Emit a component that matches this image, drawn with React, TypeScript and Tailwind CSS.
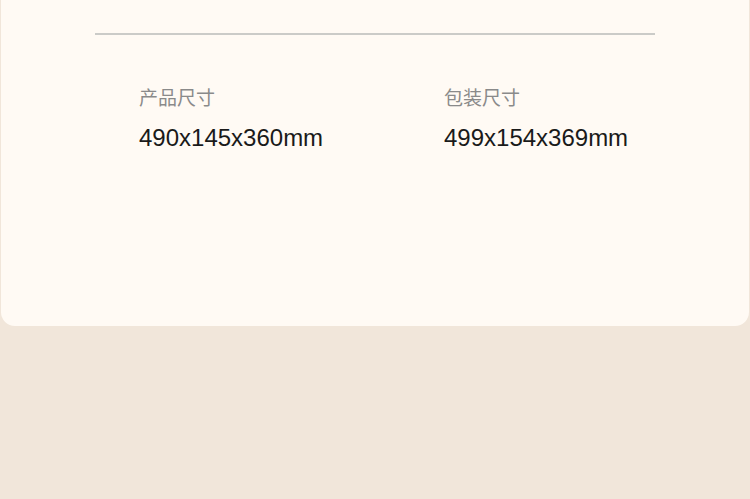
export default function App() {
  const items = [
    { label: '产品尺寸', value: '490x145x360mm' },
    { label: '包装尺寸', value: '499x154x369mm' },
  ]
  return (
    <div className='w-[750px] h-[499px] bg-[#f1e6da] overflow-hidden' style={{ fontFamily: '"Liberation Sans", "Noto Sans CJK SC", sans-serif' }}>
      <div className='mx-[1px] h-[326px] bg-[#fffaf4] rounded-b-[14px] pt-[33px]'>
        <div className='mx-[94px] h-[2px] bg-[#cbcbc8]'></div>
        <div className='flex pl-[138px] pt-[52px]'>
          {items.map((it) => (
            <div key={it.label} className='w-[310px]'>
              <div className='text-[19px] leading-[24px] text-[#8a8a8a]'>{it.label}</div>
              <div className='mt-[13px] text-[24px] leading-[28px] text-[#1a1a1a]'>{it.value}</div>
            </div>
          ))}
        </div>
      </div>
    </div>
  )
}
